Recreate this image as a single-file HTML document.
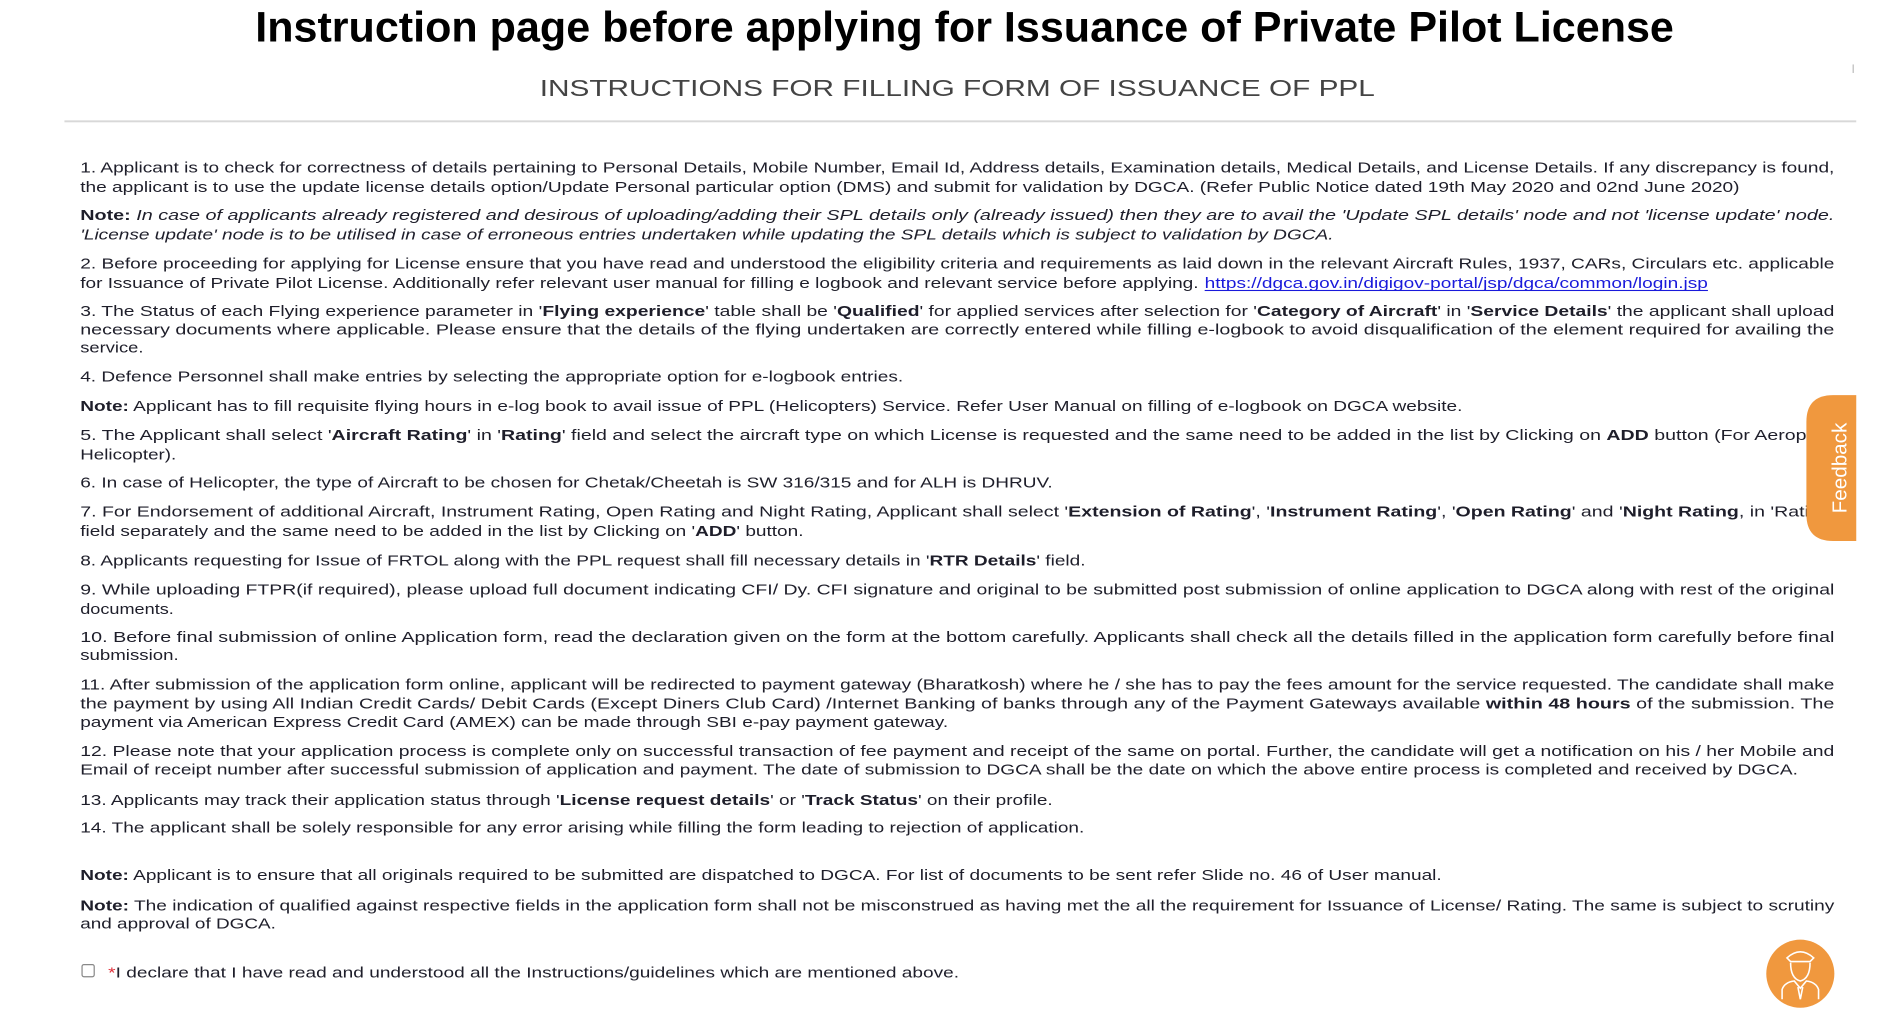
<!DOCTYPE html>
<html><head><meta charset="utf-8"><style>
html,body{margin:0;padding:0;background:#fff;width:1900px;height:1013px;overflow:hidden}
svg{display:block}
.b{font-family:"Liberation Sans",Arial,sans-serif;font-size:12px;fill:#1e1e2a}
.w{font-weight:bold}
</style></head><body>
<svg width="1900" height="1013" viewBox="0 0 1563 833.3" xmlns="http://www.w3.org/2000/svg">
<text x="210" y="34" textLength="1167" lengthAdjust="spacingAndGlyphs" font-family="Liberation Sans,Arial,sans-serif" font-weight="bold" font-size="35" fill="#000">Instruction page before applying for Issuance of Private Pilot License</text>
<text x="444" y="79" textLength="687" lengthAdjust="spacingAndGlyphs" font-family="Liberation Sans,Arial,sans-serif" font-size="19" fill="#444">INSTRUCTIONS FOR FILLING FORM OF ISSUANCE OF PPL</text>
<rect x="1524" y="53" width="1" height="7" fill="#bbb"/>
<rect x="53" y="99" width="1474" height="1.6" fill="#d8d8d8"/>
<g class="b">
<text x="66" y="142" textLength="1443" lengthAdjust="spacingAndGlyphs">1. Applicant is to check for correctness of details pertaining to Personal Details, Mobile Number, Email Id, Address details, Examination details, Medical Details, and License Details. If any discrepancy is found,</text>
<text x="66" y="158" textLength="1365" lengthAdjust="spacingAndGlyphs">the applicant is to use the update license details option/Update Personal particular option (DMS) and submit for validation by DGCA. (Refer Public Notice dated 19th May 2020 and 02nd June 2020)</text>
<text x="66" y="181" textLength="1443" lengthAdjust="spacingAndGlyphs"><tspan class="w">Note:</tspan> <tspan font-style="italic">In case of applicants already registered and desirous of uploading/adding their SPL details only (already issued) then they are to avail the 'Update SPL details' node and not 'license update' node.</tspan></text>
<text x="66" y="197" textLength="1031" lengthAdjust="spacingAndGlyphs" font-style="italic">'License update' node is to be utilised in case of erroneous entries undertaken while updating the SPL details which is subject to validation by DGCA.</text>
<text x="66" y="221" textLength="1443" lengthAdjust="spacingAndGlyphs">2. Before proceeding for applying for License ensure that you have read and understood the eligibility criteria and requirements as laid down in the relevant Aircraft Rules, 1937, CARs, Circulars etc. applicable</text>
<text x="66" y="237" textLength="920" lengthAdjust="spacingAndGlyphs">for Issuance of Private Pilot License. Additionally refer relevant user manual for filling e logbook and relevant service before applying.</text>
<text x="991" y="237" textLength="414" lengthAdjust="spacingAndGlyphs" fill="#1a1adb">https://dgca.gov.in/digigov-portal/jsp/dgca/common/login.jsp</text>
<rect x="991" y="238.5" width="414" height="0.9" fill="#1a1adb"/>
<text x="66" y="260" textLength="1443" lengthAdjust="spacingAndGlyphs">3. The Status of each Flying experience parameter in '<tspan class="w">Flying experience</tspan>' table shall be '<tspan class="w">Qualified</tspan>' for applied services after selection for '<tspan class="w">Category of Aircraft</tspan>' in '<tspan class="w">Service Details</tspan>' the applicant shall upload</text>
<text x="66" y="275" textLength="1443" lengthAdjust="spacingAndGlyphs">necessary documents where applicable. Please ensure that the details of the flying undertaken are correctly entered while filling e-logbook to avoid disqualification of the element required for availing the</text>
<text x="66" y="290" textLength="52" lengthAdjust="spacingAndGlyphs">service.</text>
<text x="66" y="314" textLength="677" lengthAdjust="spacingAndGlyphs">4. Defence Personnel shall make entries by selecting the appropriate option for e-logbook entries.</text>
<text x="66" y="338" textLength="1137" lengthAdjust="spacingAndGlyphs"><tspan class="w">Note:</tspan> Applicant has to fill requisite flying hours in e-log book to avail issue of PPL (Helicopters) Service. Refer User Manual on filling of e-logbook on DGCA website.</text>
<text x="66" y="362" textLength="1455" lengthAdjust="spacingAndGlyphs">5. The Applicant shall select '<tspan class="w">Aircraft Rating</tspan>' in '<tspan class="w">Rating</tspan>' field and select the aircraft type on which License is requested and the same need to be added in the list by Clicking on <tspan class="w">ADD</tspan> button (For Aeroplane/</text>
<text x="66" y="378" textLength="79" lengthAdjust="spacingAndGlyphs">Helicopter).</text>
<text x="66" y="401" textLength="800" lengthAdjust="spacingAndGlyphs">6. In case of Helicopter, the type of Aircraft to be chosen for Chetak/Cheetah is SW 316/315 and for ALH is DHRUV.</text>
<text x="66" y="425" textLength="1443" lengthAdjust="spacingAndGlyphs">7. For Endorsement of additional Aircraft, Instrument Rating, Open Rating and Night Rating, Applicant shall select '<tspan class="w">Extension of Rating</tspan>', '<tspan class="w">Instrument Rating</tspan>', '<tspan class="w">Open Rating</tspan>' and '<tspan class="w">Night Rating</tspan>, in 'Rating'</text>
<text x="66" y="441" textLength="595" lengthAdjust="spacingAndGlyphs">field separately and the same need to be added in the list by Clicking on '<tspan class="w">ADD</tspan>' button.</text>
<text x="66" y="465" textLength="827" lengthAdjust="spacingAndGlyphs">8. Applicants requesting for Issue of FRTOL along with the PPL request shall fill necessary details in '<tspan class="w">RTR Details</tspan>' field.</text>
<text x="66" y="489" textLength="1443" lengthAdjust="spacingAndGlyphs">9. While uploading FTPR(if required), please upload full document indicating CFI/ Dy. CFI signature and original to be submitted post submission of online application to DGCA along with rest of the original</text>
<text x="66" y="505" textLength="77" lengthAdjust="spacingAndGlyphs">documents.</text>
<text x="66" y="528" textLength="1443" lengthAdjust="spacingAndGlyphs">10. Before final submission of online Application form, read the declaration given on the form at the bottom carefully. Applicants shall check all the details filled in the application form carefully before final</text>
<text x="66" y="543" textLength="81" lengthAdjust="spacingAndGlyphs">submission.</text>
<text x="66" y="567" textLength="1443" lengthAdjust="spacingAndGlyphs">11. After submission of the application form online, applicant will be redirected to payment gateway (Bharatkosh) where he / she has to pay the fees amount for the service requested. The candidate shall make</text>
<text x="66" y="583" textLength="1443" lengthAdjust="spacingAndGlyphs">the payment by using All Indian Credit Cards/ Debit Cards (Except Diners Club Card) /Internet Banking of banks through any of the Payment Gateways available <tspan class="w">within 48 hours</tspan> of the submission. The</text>
<text x="66" y="598" textLength="714" lengthAdjust="spacingAndGlyphs">payment via American Express Credit Card (AMEX) can be made through SBI e-pay payment gateway.</text>
<text x="66" y="622" textLength="1443" lengthAdjust="spacingAndGlyphs">12. Please note that your application process is complete only on successful transaction of fee payment and receipt of the same on portal. Further, the candidate will get a notification on his / her Mobile and</text>
<text x="66" y="637" textLength="1413" lengthAdjust="spacingAndGlyphs">Email of receipt number after successful submission of application and payment. The date of submission to DGCA shall be the date on which the above entire process is completed and received by DGCA.</text>
<text x="66" y="662" textLength="800" lengthAdjust="spacingAndGlyphs">13. Applicants may track their application status through '<tspan class="w">License request details</tspan>' or '<tspan class="w">Track Status</tspan>' on their profile.</text>
<text x="66" y="685" textLength="826" lengthAdjust="spacingAndGlyphs">14. The applicant shall be solely responsible for any error arising while filling the form leading to rejection of application.</text>
<text x="66" y="724" textLength="1120" lengthAdjust="spacingAndGlyphs"><tspan class="w">Note:</tspan> Applicant is to ensure that all originals required to be submitted are dispatched to DGCA. For list of documents to be sent refer Slide no. 46 of User manual.</text>
<text x="66" y="749" textLength="1443" lengthAdjust="spacingAndGlyphs"><tspan class="w">Note:</tspan> The indication of qualified against respective fields in the application form shall not be misconstrued as having met the all the requirement for Issuance of License/ Rating. The same is subject to scrutiny</text>
<text x="66" y="764" textLength="161" lengthAdjust="spacingAndGlyphs">and approval of DGCA.</text>
<rect x="67.5" y="793.5" width="10" height="10" rx="1.5" fill="#fff" stroke="#888" stroke-width="1"/>
<text x="89" y="804" textLength="700" lengthAdjust="spacingAndGlyphs"><tspan fill="#e0303a">*</tspan>I declare that I have read and understood all the Instructions/guidelines which are mentioned above.</text>
</g>
<path d="M1527,325 L1508,325 Q1486,325 1486,347 L1486,423 Q1486,445 1508,445 L1527,445 Z" fill="#F0983E"/>
<text transform="translate(1519,385) rotate(-90)" text-anchor="middle" font-family="Liberation Sans,Arial,sans-serif" font-size="17" fill="#fff">Feedback</text>
<circle cx="1481" cy="801" r="28" fill="#F0983E"/>
<g fill="none" stroke="#fff" stroke-width="1.3">
<path d="M1470,788 Q1481,778 1492,788 L1489,791 L1473,791 Z"/>
<path d="M1473,792 Q1473,805 1481,807 Q1489,805 1489,792"/>
<path d="M1466,822 L1466,814 Q1468,808 1476,807 L1481,813 L1486,807 Q1494,808 1496,814 L1496,822"/>
<path d="M1479,812 L1481,822 L1483,812"/>
</g>
</svg>
</body></html>
